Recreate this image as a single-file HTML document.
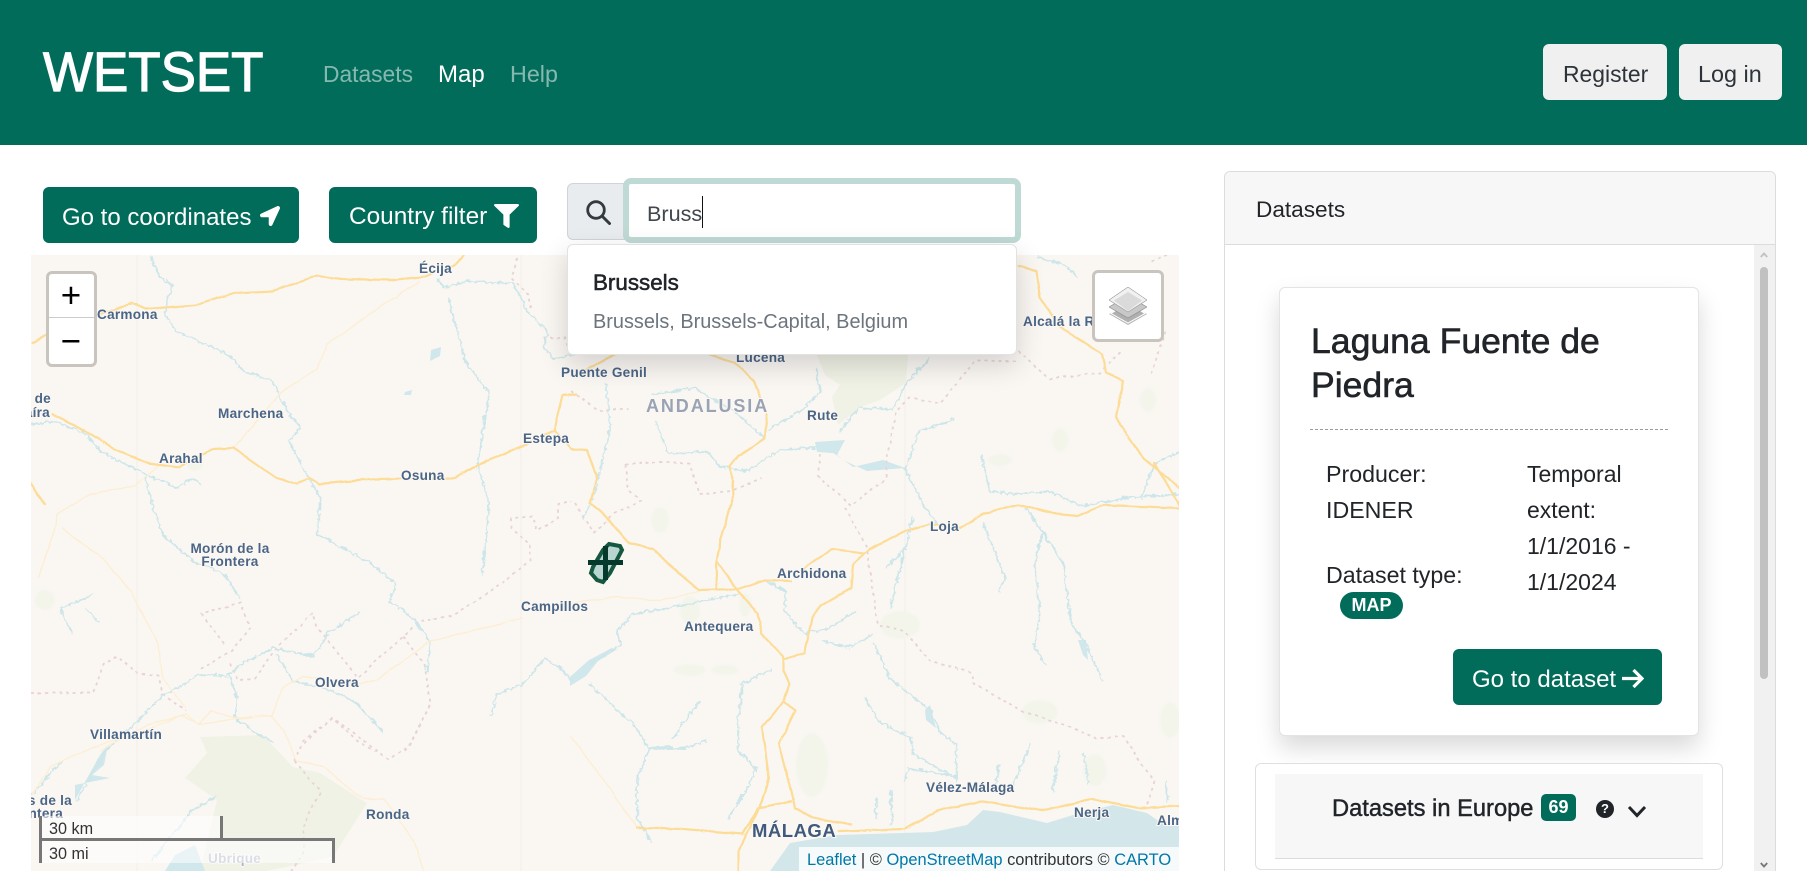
<!DOCTYPE html>
<html lang="en"><head><meta charset="utf-8"><title>WETSET</title>
<style>
*{box-sizing:border-box}
html{margin:0;padding:0;width:1807px;height:871px;overflow:hidden;background:#fff}
body{margin:0;padding:0;position:relative;width:1807px;height:871px;overflow:hidden;background:#fff;font-family:"Liberation Sans",sans-serif;color:#212529}
.a{position:absolute}
.t{position:absolute;white-space:nowrap;line-height:36px}
.btn{position:absolute;background:#016c5a;border-radius:6px}
.w{color:#fff}
header{position:absolute;left:0;top:0;width:1807px;height:145px;background:#016c5a}
#map{position:absolute;left:31px;top:255px;width:1148px;height:616px;overflow:hidden;background:#faf7f3}
#map svg{position:absolute;left:-31px;top:-255px}
.road{fill:none;stroke:#fddc98;stroke-width:2.2;stroke-linejoin:round;stroke-linecap:round}
.lroad{fill:none;stroke:#fdeed3;stroke-width:1.4;stroke-linejoin:round}
.riv{fill:none;stroke:#cde6ea;stroke-width:1.7;stroke-linejoin:round;stroke-linecap:round}
.bd{fill:none;stroke:#e8d3d4;stroke-width:1.8;stroke-dasharray:3 4}
.lab{font:700 13.6px "Liberation Sans",sans-serif;fill:#4b6586;stroke:#fbf8f4;stroke-width:2px;paint-order:stroke;letter-spacing:.25px}
</style></head><body>

<header>
<div class="t w" style="left:43px;top:41.6px;font-size:56px;line-height:60px;transform:scaleX(.945);transform-origin:0 0;-webkit-text-stroke:1.2px #fff">WETSET</div>
<div class="t" style="left:323px;top:56.1px;font-size:22.8px;color:rgba(255,255,255,.52)">Datasets</div>
<div class="t w" style="left:438px;top:56.7px;font-size:24px">Map</div>
<div class="t" style="left:510px;top:55.9px;font-size:23.3px;color:rgba(255,255,255,.52)">Help</div>
<div class="a" style="left:1543px;top:44px;width:124px;height:56px;background:#f0f0f0;border-radius:6px"></div>
<div class="t" style="left:1563px;top:56px;font-size:22.9px;color:#2d3339">Register</div>
<div class="a" style="left:1679px;top:44px;width:103px;height:56px;background:#f0f0f0;border-radius:6px"></div>
<div class="t" style="left:1698px;top:55.9px;font-size:23.4px;color:#2d3339">Log in</div>
</header>

<div class="btn" style="left:43px;top:187px;width:256px;height:56px"></div>
<div class="t w" style="left:62px;top:199.7px;font-size:24px">Go to coordinates</div>
<svg class="a" style="left:260px;top:206px" width="20" height="20" viewBox="0 0 512 512"><path fill="#fff" d="M444.52 3.52L28.74 195.42c-47.97 22.39-31.98 92.75 19.19 92.75h175.91v175.91c0 51.17 70.36 67.17 92.75 19.19l191.9-415.78c15.99-38.39-25.59-79.97-63.97-63.97z"/></svg>
<div class="btn" style="left:329px;top:187px;width:208px;height:56px"></div>
<div class="t w" style="left:349px;top:199.2px;font-size:24.4px">Country filter</div>
<svg class="a" style="left:494px;top:204px" width="25" height="24" viewBox="0 0 512 512" preserveAspectRatio="none"><path fill="#fff" d="M487.976 0H24.028C2.71 0-8.047 25.866 7.058 40.971L192 225.941V432c0 7.831 3.821 15.17 10.237 19.662l80 55.98C298.02 518.69 320 507.493 320 487.98V225.941l184.947-184.97C520.021 25.896 509.338 0 487.976 0z"/></svg>

<div id="map">
<svg width="1807" height="871" viewBox="0 0 1807 871">
<defs>
<filter id="wr" x="0" y="0" width="100%" height="100%" filterUnits="userSpaceOnUse" primitiveUnits="userSpaceOnUse"><feTurbulence baseFrequency=".14" numOctaves="2" seed="4"/><feDisplacementMap in="SourceGraphic" scale="5" xChannelSelector="R" yChannelSelector="G"/><feGaussianBlur stdDeviation=".3"/></filter>
<filter id="wd" x="0" y="0" width="100%" height="100%" filterUnits="userSpaceOnUse" primitiveUnits="userSpaceOnUse"><feTurbulence baseFrequency=".04" numOctaves="1" seed="7"/><feDisplacementMap in="SourceGraphic" scale="3" xChannelSelector="R" yChannelSelector="G"/><feGaussianBlur stdDeviation=".25"/></filter>
<filter id="bl"><feGaussianBlur stdDeviation="1.2"/></filter>
</defs>
<g stroke="#f3efea" stroke-width="1"><path d="M137 255V871M521 255V871M905 255V871"/></g>
<!-- parks -->
<g fill="#f0f2e6">
<path d="M817 355L908 355L906 383L880 400L861 407L838 425L832 397L840 385L825 375Z"/>
<path d="M200 737L263 735L293 767L320 773L367 803L333 857L267 871L200 871L217 800L185 778L207 753Z"/>
</g>
<g fill="#f3f4ea" filter="url(#bl)">
<ellipse cx="660" cy="520" rx="9" ry="13"/><ellipse cx="690" cy="610" rx="10" ry="14"/><ellipse cx="745" cy="605" rx="6" ry="12"/>
<ellipse cx="45" cy="600" rx="10" ry="10"/><ellipse cx="1060" cy="440" rx="8" ry="12"/><ellipse cx="1000" cy="460" rx="12" ry="6"/><ellipse cx="1148" cy="400" rx="8" ry="12"/>
<ellipse cx="1040" cy="712" rx="18" ry="12"/><ellipse cx="1095" cy="770" rx="12" ry="16"/><ellipse cx="1170" cy="720" rx="10" ry="18"/><ellipse cx="900" cy="625" rx="20" ry="14"/>
<ellipse cx="690" cy="670" rx="16" ry="6"/><ellipse cx="725" cy="670" rx="14" ry="5"/><ellipse cx="812" cy="765" rx="16" ry="32"/><ellipse cx="195" cy="465" rx="8" ry="6"/>
</g>
<!-- sea -->
<path fill="#d3e7ea" d="M770 871L790 843L837 835L933 832L967 825L983 810L1000 812L1047 823L1073 815L1113 805L1147 813L1160 822L1179 822V871Z"/>
<!-- lakes -->
<g fill="#d0e7eb">
<path d="M815 442L845 440L837 455L853 467L883 460L905 468L867 471L847 462L833 453L817 452Z"/>
<path d="M75 800L100 755L108 745L104 765L92 775L110 778L75 785Z"/>
<path d="M431 350L441 347L440 356L430 361Z"/><path d="M405 392L412 390L411 395L404 395Z"/>
<path d="M589 660L612 648L616 650L598 661L586 676L570 686V677Z"/>
<path d="M1078 640L1086 640L1088 660L1083 655Z"/><path d="M925 710L930 705L936 728L926 720Z"/>
<path d="M175 855L195 845L205 871H165Z"/>
</g>
<!-- dashed borders -->
<g filter="url(#wd)">
<path class="bd" d="M30 692L92 692L102 663L116 655L137 672L157 675L161 693L185 710"/>
<path class="bd" d="M223 643L200 613L240 602L249 627L230 650L199 668M230 663L237 680L254 677L275 647L312 613L316 627L357 677L402 635L419 620L450 615L491 590L529 560L529 543L510 527L510 518L531 515L536 530L557 517L557 503L570 500"/>
<path class="bd" d="M402 635L423 663L429 703L416 730L404 750M298 747L331 717L357 740L374 750"/>
<path class="bd" d="M293 760L302 740L332 717L353 732L387 758L408 745L430 700M293 760L320 790L302 827L303 850L290 871"/>
<path class="bd" d="M516 257L510 277L527 293L530 310M543 337L565 337L570 355"/>
<path class="bd" d="M570 390L597 410L628 408M624 463L665 462L689 462L698 493L731 490L760 477M624 463L628 490L640 500L613 513L593 532L574 502"/>
<path class="bd" d="M1017 350L1048 378L1099 372L1120 350M1015 360L974 360L939 402L908 397L895 410L887 453L885 478L850 505L817 475L819 453"/>
<path class="bd" d="M844 507L866 547L877 625L904 630L928 660L971 672L973 683L1021 710L1072 727L1095 738L1122 735L1153 780L1146 803"/>
<path class="bd" d="M1150 260L1179 250M1165 330L1150 372"/>
</g>
<!-- rivers -->
<g class="riv" filter="url(#wr)">
<path d="M149 255L157 273L171 285L163 313L175 330L226 353L243 370L271 380L285 407L299 427L287 440L302 467L319 497L316 533L347 550L367 560L395 583L388 600L412 617L429 640L426 670"/>
<path d="M447 297L464 360L488 393L476 463L488 503L481 573"/>
<path d="M30 423L54 420L85 433L99 450L144 473L147 490L161 533L192 560L223 573L238 597"/>
<path d="M144 473L175 487L192 477L199 483"/>
<path d="M436 277L443 287L464 280L512 282L526 310L547 330L543 347L553 358L575 352"/>
<path d="M357 612L326 633L312 655L271 647L240 663L226 675L199 673L161 695L133 723L106 747L75 800"/>
<path d="M276 653L291 680L323 687L353 700L381 730"/>
<path d="M229 675L236 697L233 717L257 733L271 740"/>
<path d="M59 607L92 593M85 607L97 620M59 608L71 633"/>
<path d="M491 713L495 693L522 683L543 657L560 667L570 680"/>
<path d="M605 383L609 427L593 493L582 517"/>
<path d="M652 393L694 387L737 413L764 437"/>
<path d="M654 420L667 453L706 450L718 465L745 470L780 448L815 447"/>
<path d="M904 468L918 430L953 418"/><path d="M904 468L924 507L936 522"/>
<path d="M768 428L803 407L819 390L815 368"/>
<path d="M838 430L858 407L892 408L904 383L928 357"/>
<path d="M980 453L988 490L1010 493L1048 490L1080 505L1122 497L1179 493"/>
<path d="M1025 507L1041 530L1062 563L1070 623L1085 643L1101 680"/>
<path d="M1041 530L1033 563L1039 607L1033 647L1045 663"/>
<path d="M982 523L1004 577L998 590"/>
<path d="M912 517L904 547L885 567M904 547L889 607"/>
<path d="M764 580L784 590L784 610L803 633L827 627L854 610"/>
<path d="M823 640L846 647L871 633"/>
<path d="M737 593L663 607L632 613L615 630L620 643L589 663"/>
<path d="M589 683L617 710L632 723L648 747L636 777L636 817L650 840"/>
<path d="M648 747L683 747L704 740M671 738L698 700"/>
<path d="M770 668L741 683L737 723L737 750L755 767L749 783L727 817"/>
<path d="M873 643L889 677L908 693L930 710L938 730L955 743L955 780"/>
<path d="M864 697L877 720L910 737L912 753L955 777"/>
<path d="M903 780L908 767L955 775"/>
<path d="M998 763L994 787M1029 743L1010 787M1058 750L1052 790M1083 753L1087 783M1165 780L1167 800M875 797L875 817M890 790L891 823"/>
<path d="M1153 462L1140 497M1153 462L1179 450"/>
<path d="M1037 255L1065 265L1075 275"/>
<path d="M150 860L190 810L215 795"/>
<path d="M30 795L60 760"/>
</g>
<!-- light roads -->
<g class="lroad" filter="url(#wd)">
<path d="M419 280L374 310L326 343L316 368L278 393L233 447"/>
<path d="M159 463L133 485L89 493L56 513L54 527L37 577"/>
<path d="M61 527L102 557L130 590L157 643L161 677L185 707"/>
<path d="M522 617L429 640L374 680L357 683L302 675L281 687L271 715L237 717L199 723L181 715L147 723L99 750"/>
<path d="M30 795L50 765L90 747L150 727L185 713L197 723L210 710L240 718L270 715L283 730L295 760L323 765L347 787L363 798L383 798L413 840L423 871"/>
<path d="M698 590L659 600L617 596L570 602"/>
<path d="M570 735L610 790L636 827"/>
</g>
<!-- main roads -->
<g class="road" filter="url(#wd)">
<path d="M31 342L60 326L96 315L130 302L145 308L195 304L233 292L272 290L316 275L341 278L390 279L421 276L452 265L463 255"/>
<path d="M51 413L85 430L113 448L147 462L178 466L212 448L233 447L274 476L295 483L309 477L318 483L374 478L454 477L478 463L522 445L553 430L570 448L586 449L596 477L589 502L609 520L628 542L652 548L675 570L698 589L737 588L764 579L790 580"/>
<path d="M30 483L44 503"/>
<path d="M553 430L562 395L575 393"/>
<path d="M733 493L731 477L729 465L737 455L764 437L766 413L753 380L735 363"/>
<path d="M733 493L720 537L715 563L716 587"/>
<path d="M716 560L737 590L757 612L761 633L782 655L782 670L788 683L782 700L761 727L768 777L761 800L753 817L737 850L737 871"/>
<path d="M782 700L795 710L778 743L792 797L794 807L811 817L850 823"/>
<path d="M782 658L803 652L811 617L819 605L850 587L852 563L868 548L904 530L928 523L959 527L982 513L1017 504L1056 513L1076 515L1103 504L1179 507"/>
<path d="M803 567L831 548L862 552"/>
<path d="M1018 265L1035 270L1039 297L1060 327L1101 353L1105 372L1122 380L1115 417L1142 457L1179 487M1153 462L1179 505"/>
<path d="M636 827L683 828L741 833L757 807L790 800M838 830L904 828L936 810L982 800L1041 810L1091 798L1138 807L1179 805"/>
<path d="M640 350L680 345M700 352L735 362M583 370L620 350"/>
</g>
<!-- polygon feature -->
<path d="M609 544L620 546L622 550L610 573L603 582L597 580L591 573L593 567L603 550Z" fill="#b9d5d1" stroke="#15573f" stroke-width="4"/>
<path d="M588 562.500H623M605.500 546V580" stroke="#04392b" stroke-width="5"/>
<!-- labels -->
<text class="lab" x="419" y="273">Écija</text>
<text class="lab" x="97" y="319">Carmona</text>
<text class="lab" x="51" y="403" text-anchor="end">Alcalá de</text>
<text class="lab" x="50" y="417" text-anchor="end">Guadaíra</text>
<text class="lab" x="218" y="418">Marchena</text>
<text class="lab" x="159" y="463">Arahal</text>
<text class="lab" x="401" y="480">Osuna</text>
<text class="lab" x="523" y="443">Estepa</text>
<text class="lab" x="230" y="553" text-anchor="middle">Morón de la</text>
<text class="lab" x="230" y="566" text-anchor="middle">Frontera</text>
<text class="lab" x="521" y="611">Campillos</text>
<text class="lab" x="315" y="687">Olvera</text>
<text class="lab" x="90" y="739">Villamartín</text>
<text class="lab" x="72" y="805" text-anchor="end">Arcos de la</text>
<text class="lab" x="63" y="818" text-anchor="end">Frontera</text>
<text class="lab" x="366" y="819">Ronda</text>
<text class="lab" x="208" y="863" style="fill:#aab6c8">Ubrique</text>
<text class="lab" x="561" y="377">Puente Genil</text>
<text class="lab" x="736" y="362">Lucena</text>
<text class="lab" x="646" y="412" style="font-size:18px;fill:#9aa3b3;letter-spacing:1.900px">ANDALUSIA</text>
<text class="lab" x="807" y="420">Rute</text>
<text class="lab" x="930" y="531">Loja</text>
<text class="lab" x="1023" y="326">Alcalá la Real</text>
<text class="lab" x="777" y="578">Archidona</text>
<text class="lab" x="684" y="631">Antequera</text>
<text class="lab" x="926" y="792">Vélez-Málaga</text>
<text class="lab" x="1074" y="817">Nerja</text>
<text class="lab" x="1157" y="825">Almuñécar</text>
<text class="lab" x="752" y="837" style="font-size:18.500px;letter-spacing:.5px;fill:#3f5a7c">MÁLAGA</text>
</svg>

<!-- zoom control -->
<div class="a" style="left:15px;top:16px;width:51px;height:96px;background:#fff;border:3.500px solid #c9c5be;border-radius:6px">
<div class="a" style="left:0;right:0;top:43px;height:1px;background:#ccc"></div>
<div class="a" style="left:0;width:44px;top:1px;height:42px;text-align:center;font:35px/42px 'Liberation Sans',sans-serif;color:#000">+</div>
<div class="a" style="left:0;width:44px;top:47px;height:42px;text-align:center;font:35px/42px 'Liberation Sans',sans-serif;color:#000">−</div>
</div>
<!-- layers control -->
<div class="a" style="left:1061px;top:15px;width:72px;height:72px;background:#fff;border:3.500px solid #c9c5be;border-radius:6px"></div>
<svg class="a" style="left:1078px;top:32px" width="38" height="38" viewBox="0 0 38 38">
<path d="M19 16L38 27L19 38L0 27Z" fill="#b8b8b8"/><path d="M19 16L36 26.500L19 36L2 26.500Z" fill="#b0b0b0" stroke="#fff" stroke-width="1"/>
<path d="M19 9L38 20L19 31L0 20Z" fill="#c8c8c8" stroke="#8c8c8c" stroke-width=".6"/>
<path d="M19 0L38 13L19 25L0 13Z" fill="#f1f1f1" stroke="#9a9a9a" stroke-width=".6"/>
<path d="M19 5L33 13.500L19 24L5 13.500Z" fill="#dadada"/>
</svg>
<!-- scale -->
<div class="a" style="left:8px;top:561px;width:184px;height:25px;background:rgba(255,255,255,.55);border:3px solid #777;border-top:0;font:16.200px/27px 'Liberation Sans',sans-serif;color:#333;padding-left:7px;white-space:nowrap">30 km</div>
<div class="a" style="left:8px;top:583px;width:296px;height:25px;background:rgba(255,255,255,.55);border:3px solid #777;border-bottom:0;font:16.200px/26px 'Liberation Sans',sans-serif;color:#333;padding-left:7px;white-space:nowrap">30 mi</div>
<!-- attribution -->
<div class="a" style="left:768px;top:592px;width:380px;height:24px;background:rgba(255,255,255,.8);font:16.450px/27px 'Liberation Sans',sans-serif;color:#333;padding-left:8px;white-space:nowrap;overflow:hidden"><span style="color:#0078a8">Leaflet</span> | © <span style="color:#0078a8">OpenStreetMap</span> contributors © <span style="color:#0078a8">CARTO</span></div>
</div>

<!-- search -->
<div class="a" style="left:567px;top:183px;width:60px;height:57px;background:#e9ecef;border:1px solid #ced4da;border-radius:6px 0 0 6px"></div>
<svg class="a" style="left:585px;top:199px" width="26" height="26" viewBox="0 0 26 26"><circle cx="11" cy="11" r="8.300" fill="none" stroke="#333a40" stroke-width="2.800"/><path d="M17 17L24.500 24.500" stroke="#333a40" stroke-width="3" stroke-linecap="round"/></svg>
<div class="a" style="left:623px;top:178px;width:398px;height:65px;background:#fff;border:6px solid #bfd9d5;border-radius:8px"></div>
<div class="t" style="left:647px;top:195.500px;font-size:21.600px;color:#41474e">Bruss</div>
<div class="a" style="left:702px;top:196px;width:1px;height:32px;background:#111"></div>
<!-- dropdown -->
<div class="a" style="left:567px;top:244px;width:450px;height:111px;background:#fff;border:1px solid #e2e2e2;border-radius:6px;box-shadow:0 10px 28px rgba(0,0,0,.16)"></div>
<div class="t" style="left:593px;top:264.500px;font-size:22.400px;color:#212529;-webkit-text-stroke:.55px #212529">Brussels</div>
<div class="t" style="left:593px;top:303.500px;font-size:19.900px;color:#6c757d">Brussels, Brussels-Capital, Belgium</div>

<!-- datasets panel -->
<div class="a" style="left:1224px;top:171px;width:552px;height:700px;background:#fff;border:1px solid #dcdcdc;border-bottom:0;border-radius:6px 6px 0 0;overflow:hidden">
<div class="a" style="left:0;top:0;right:0;height:73px;background:#f7f7f7;border-bottom:1px solid #dcdcdc"></div>
<div class="a" style="left:529px;top:73px;width:22px;bottom:0;background:#f1f1f1"></div>
<div class="a" style="left:535px;top:95px;width:8px;height:412px;background:#c1c1c1;border-radius:4px"></div>
</div>
<div class="t" style="left:1256px;top:192.200px;font-size:22.600px;color:#212529">Datasets</div>
<svg class="a" style="left:1760px;top:252px" width="8" height="6" viewBox="0 0 8 6"><path d="M.8 5L4 1.500L7.200 5" fill="none" stroke="#c0c0c0" stroke-width="1.800"/></svg>
<svg class="a" style="left:1760px;top:862px" width="8" height="6" viewBox="0 0 8 6"><path d="M.8 1L4 4.500L7.200 1" fill="none" stroke="#777" stroke-width="1.800"/></svg>

<!-- dataset card -->
<div class="a" style="left:1279px;top:287px;width:420px;height:449px;background:#fff;border:1px solid #e4e4e4;border-radius:6px;box-shadow:0 12px 24px rgba(0,0,0,.15)"></div>
<div class="t" style="left:1311px;top:319px;font-size:35.600px;line-height:44px;color:#212529;-webkit-text-stroke:.6px #212529;white-space:nowrap">Laguna Fuente de</div>
<div class="t" style="left:1311px;top:363px;font-size:35.600px;line-height:44px;color:#212529;-webkit-text-stroke:.6px #212529">Piedra</div>
<div class="a" style="left:1310px;top:429px;width:358px;height:0;border-top:1px dashed #9b9b9b"></div>
<div class="t" style="left:1326px;top:456px;font-size:23.200px">Producer:</div>
<div class="t" style="left:1326px;top:492px;font-size:23.200px">IDENER</div>
<div class="t" style="left:1326px;top:557px;font-size:23.200px">Dataset type:</div>
<div class="a w" style="left:1340px;top:592px;width:63px;height:27px;background:#016c5a;border-radius:14px;text-align:center;font:700 18px/27px 'Liberation Sans',sans-serif">MAP</div>
<div class="t" style="left:1527px;top:456px;font-size:23px">Temporal</div>
<div class="t" style="left:1527px;top:492px;font-size:23px">extent:</div>
<div class="t" style="left:1527px;top:528px;font-size:23px">1/1/2016 -</div>
<div class="t" style="left:1527px;top:564px;font-size:23px">1/1/2024</div>
<div class="btn" style="left:1453px;top:649px;width:209px;height:56px"></div>
<div class="t w" style="left:1472px;top:661.700px;font-size:24px">Go to dataset</div>
<svg class="a" style="left:1621px;top:668px" width="23" height="21" viewBox="0 0 23 21"><path d="M1 10.500H20M12.500 2L21 10.500L12.500 19" fill="none" stroke="#fff" stroke-width="3.200"/></svg>

<!-- accordion -->
<div class="a" style="left:1255px;top:763px;width:468px;height:107px;background:#fff;border:1px solid #dfdfdf;border-radius:6px"></div>
<div class="a" style="left:1275px;top:774px;width:428px;height:85px;background:#f7f7f7;border-bottom:1px solid #dcdcdc"></div>
<div class="t" style="left:1332px;top:791px;font-size:23.700px;color:#212529;-webkit-text-stroke:.45px #212529">Datasets in Europe</div>
<div class="a w" style="left:1541px;top:794px;width:35px;height:27px;background:#016c5a;border-radius:5px;text-align:center;font:700 18px/26px 'Liberation Sans',sans-serif">69</div>
<div class="a" style="left:1596px;top:800px;width:18px;height:18px;border-radius:50%;background:#212529;color:#fff;text-align:center;font:700 13px/18px 'Liberation Sans',sans-serif">?</div>
<svg class="a" style="left:1627px;top:804px" width="20" height="14" viewBox="0 0 20 14"><path d="M2 3L10 11.500L18 3" fill="none" stroke="#212529" stroke-width="3"/></svg>
</body></html>
